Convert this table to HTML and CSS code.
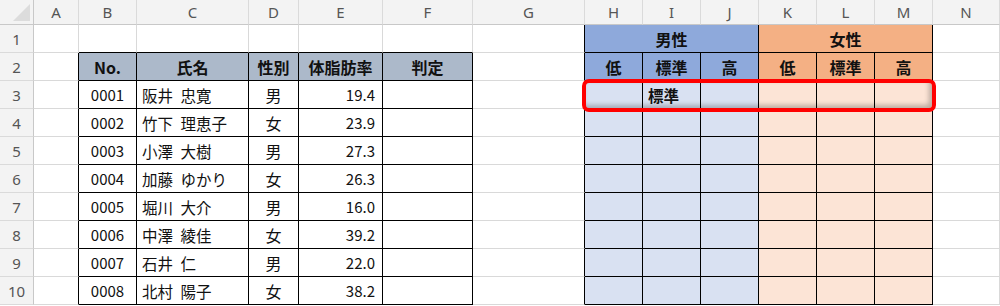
FILE: index.html
```html
<!DOCTYPE html>
<html lang="ja">
<head>
<meta charset="utf-8">
<title>Sheet</title>
<link rel="stylesheet" href="styles.css">
</head>
<body>
<div class="sheet">
  <div class="corner"><span class="tri"></span></div>
  <div class="ch">A</div><div class="ch">B</div><div class="ch">C</div><div class="ch">D</div><div class="ch">E</div><div class="ch">F</div><div class="ch">G</div><div class="ch">H</div><div class="ch">I</div><div class="ch">J</div><div class="ch">K</div><div class="ch">L</div><div class="ch">M</div><div class="ch">N</div>

  <div class="rh">1</div>
  <div class="c"></div><div class="c bb"></div><div class="c bb"></div><div class="c bb"></div><div class="c bb"></div><div class="c bb"></div><div class="c br"></div>
  <div class="c t men-h span3 b">男性</div><div class="c t wom-h span3 b">女性</div><div class="c"></div>

  <div class="rh">2</div>
  <div class="c br"></div>
  <div class="c t th b">No.</div><div class="c t th b">氏名</div><div class="c t th b">性別</div><div class="c t th b">体脂肪率</div><div class="c t th b">判定</div>
  <div class="c br"></div>
  <div class="c t men-h b">低</div><div class="c t men-h b">標準</div><div class="c t men-h b">高</div>
  <div class="c t wom-h b">低</div><div class="c t wom-h b">標準</div><div class="c t wom-h b">高</div>
  <div class="c"></div>

  <div class="rh">3</div>
  <div class="c br"></div>
  <div class="c t ctr">0001</div><div class="c t lft">阪井 忠寛</div><div class="c t ctr jp">男</div><div class="c t rgt">19.4</div><div class="c t"></div>
  <div class="c br"></div>
  <div class="c t men"></div><div class="c t men lft bold">標準</div><div class="c t men"></div>
  <div class="c t wom"></div><div class="c t wom"></div><div class="c t wom"></div>
  <div class="c"></div>

  <div class="rh">4</div>
  <div class="c br"></div>
  <div class="c t ctr">0002</div><div class="c t lft">竹下 理恵子</div><div class="c t ctr jp">女</div><div class="c t rgt">23.9</div><div class="c t"></div>
  <div class="c br"></div>
  <div class="c t men"></div><div class="c t men"></div><div class="c t men"></div>
  <div class="c t wom"></div><div class="c t wom"></div><div class="c t wom"></div>
  <div class="c"></div>

  <div class="rh">5</div>
  <div class="c br"></div>
  <div class="c t ctr">0003</div><div class="c t lft">小澤 大樹</div><div class="c t ctr jp">男</div><div class="c t rgt">27.3</div><div class="c t"></div>
  <div class="c br"></div>
  <div class="c t men"></div><div class="c t men"></div><div class="c t men"></div>
  <div class="c t wom"></div><div class="c t wom"></div><div class="c t wom"></div>
  <div class="c"></div>

  <div class="rh">6</div>
  <div class="c br"></div>
  <div class="c t ctr">0004</div><div class="c t lft">加藤 ゆかり</div><div class="c t ctr jp">女</div><div class="c t rgt">26.3</div><div class="c t"></div>
  <div class="c br"></div>
  <div class="c t men"></div><div class="c t men"></div><div class="c t men"></div>
  <div class="c t wom"></div><div class="c t wom"></div><div class="c t wom"></div>
  <div class="c"></div>

  <div class="rh">7</div>
  <div class="c br"></div>
  <div class="c t ctr">0005</div><div class="c t lft">堀川 大介</div><div class="c t ctr jp">男</div><div class="c t rgt">16.0</div><div class="c t"></div>
  <div class="c br"></div>
  <div class="c t men"></div><div class="c t men"></div><div class="c t men"></div>
  <div class="c t wom"></div><div class="c t wom"></div><div class="c t wom"></div>
  <div class="c"></div>

  <div class="rh">8</div>
  <div class="c br"></div>
  <div class="c t ctr">0006</div><div class="c t lft">中澤 綾佳</div><div class="c t ctr jp">女</div><div class="c t rgt">39.2</div><div class="c t"></div>
  <div class="c br"></div>
  <div class="c t men"></div><div class="c t men"></div><div class="c t men"></div>
  <div class="c t wom"></div><div class="c t wom"></div><div class="c t wom"></div>
  <div class="c"></div>

  <div class="rh">9</div>
  <div class="c br"></div>
  <div class="c t ctr">0007</div><div class="c t lft">石井 仁</div><div class="c t ctr jp">男</div><div class="c t rgt">22.0</div><div class="c t"></div>
  <div class="c br"></div>
  <div class="c t men"></div><div class="c t men"></div><div class="c t men"></div>
  <div class="c t wom"></div><div class="c t wom"></div><div class="c t wom"></div>
  <div class="c"></div>

  <div class="rh">10</div>
  <div class="c br"></div>
  <div class="c t ctr">0008</div><div class="c t lft">北村 陽子</div><div class="c t ctr jp">女</div><div class="c t rgt">38.2</div><div class="c t"></div>
  <div class="c br"></div>
  <div class="c t men"></div><div class="c t men"></div><div class="c t men"></div>
  <div class="c t wom"></div><div class="c t wom"></div><div class="c t wom"></div>
  <div class="c"></div>

  <div class="highlight"></div>
</div>
</body>
</html>
```

FILE: styles.css
```css
* { box-sizing: border-box; }
html, body { margin: 0; padding: 0; background: #ffffff; }
body { width: 1000px; height: 306px; overflow: hidden; }

.sheet {
  position: relative;
  display: grid;
  grid-template-columns: 34px 45px 58px 112px 50px 84px 90px 112px 58px 58px 58px 58px 58px 58px 67px;
  grid-template-rows: 25px repeat(10, 28px);
  font-family: "Noto Sans CJK JP", "Noto Sans", sans-serif;
  font-size: 15px;
  color: #111;
}

.corner {
  position: relative;
  background: #f3f3f3;
  border-right: 1px solid #c8c8c8;
  border-bottom: 1px solid #c8c8c8;
}
.tri {
  position: absolute;
  right: 3px;
  bottom: 3px;
  width: 0;
  height: 0;
  border-left: 17px solid transparent;
  border-bottom: 17px solid #dcdcdc;
}

.ch {
  background: #f3f3f3;
  border-right: 1px solid #dadada;
  border-bottom: 1px solid #c8c8c8;
  color: #555;
  font-family: "Noto Sans", "Liberation Sans", sans-serif;
  font-size: 15px;
  display: flex;
  align-items: center;
  justify-content: center;
}

.rh {
  background: #f3f3f3;
  border-right: 1px solid #c8c8c8;
  border-bottom: 1px solid #dadada;
  color: #555;
  font-family: "Noto Sans", "Liberation Sans", sans-serif;
  font-size: 15px;
  display: flex;
  align-items: center;
  justify-content: center;
  padding-top: 1px;
}

.c {
  border-right: 1px solid #d9d9d9;
  border-bottom: 1px solid #d9d9d9;
  display: flex;
  align-items: center;
  white-space: nowrap;
}
.c.br { border-right-color: #000; }
.c.bb { border-bottom-color: #000; }
.c.t {
  border-right: 1px solid #000;
  border-bottom: 1px solid #000;
}

.span3 { grid-column: span 3; }

.b { font-weight: bold; justify-content: center; font-size: 16px; }
.bold { font-weight: bold; }
.jp { font-size: 16px; }
.ctr { justify-content: center; }
.lft { justify-content: flex-start; padding-left: 5px; font-size: 15.5px; word-spacing: 4px; }
.rgt { justify-content: flex-end; padding-right: 7px; }

.th { background: #acb9ca; }
.men-h { background: #8ea9db; }
.men { background: #d9e1f2; }
.wom-h { background: #f4b084; }
.wom { background: #fce4d6; }

.highlight {
  position: absolute;
  left: 582px;
  top: 79px;
  width: 354px;
  height: 33px;
  border: 4px solid #ff0000;
  border-radius: 7px;
  box-shadow: inset -3px -3px 5px rgba(0, 0, 0, 0.25);
  pointer-events: none;
}
```
